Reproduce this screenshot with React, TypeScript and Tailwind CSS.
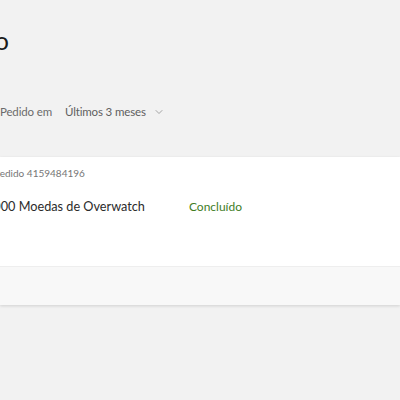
import React from 'react';
import { ChevronDown } from 'lucide-react';

const font = { fontFamily: 'Lato, "Noto Sans", Arial, sans-serif' };

export default function App() {
  return (
    <div className="w-[400px] h-[400px] overflow-hidden bg-[#f2f2f2] text-[#262626]" style={font}>
      {/* page title, scrolled past its start */}
      <div className="pt-[24px] h-[62px] w-[9px] flex justify-end">
        <h1 className="whitespace-nowrap text-[25px] leading-[32px] font-normal text-[#1a1a1a]">Histórico</h1>
      </div>

      {/* filter row */}
      <div className="mt-[40px] h-[20px] flex items-center text-[11.5px] tracking-[-0.15px] text-[#6b6b6b]">
        <span>Pedido em</span>
        <button className="ml-[13px] flex items-center gap-[7px] text-[#5f5f5f]">
          Últimos 3 meses
          <ChevronDown className="w-[12px] h-[12px] text-[#8a8a8a]" strokeWidth={1.5} />
        </button>
      </div>

      {/* order card */}
      <div className="mt-[35px] bg-white shadow-[0_1px_3px_rgba(0,0,0,0.14)]">
        <div className="h-[109px] pt-[8px]">
          <div className="-ml-[6px] whitespace-nowrap text-[10px] leading-[16px] text-[#767676]">Pedido 4159484196</div>
          <div className="mt-[16px] flex items-center h-[20px]">
            <span className="-ml-[14px] whitespace-nowrap text-[12.7px] text-[#2b2b2b]">1000 Moedas de Overwatch</span>
            <span className="ml-[44px] text-[12px] text-[#3f7d1f]">Concluído</span>
          </div>
        </div>
        <div className="h-[39px] bg-[#f8f8f8] border-t border-[#eeeeee]" />
      </div>
    </div>
  );
}
